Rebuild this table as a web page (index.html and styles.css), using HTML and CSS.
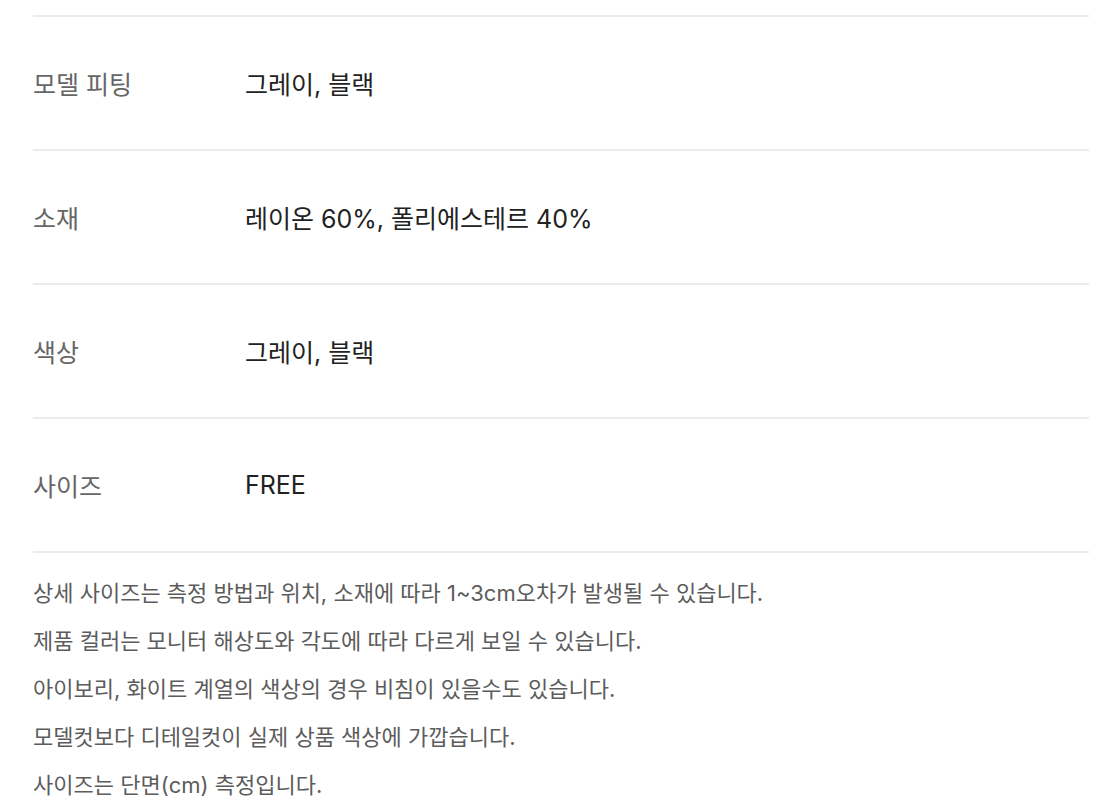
FILE: index.html
```html
<!DOCTYPE html>
<html lang="ko">
<head>
<meta charset="utf-8">
<link rel="stylesheet" href="styles.css">
</head>
<body>
<div class="page">
  <dl class="spec">
    <div class="row"><dt>모델 피팅</dt><dd>그레이, 블랙</dd></div>
    <div class="row"><dt>소재</dt><dd>레이온 60%, 폴리에스테르 40%</dd></div>
    <div class="row"><dt>색상</dt><dd>그레이, 블랙</dd></div>
    <div class="row"><dt>사이즈</dt><dd>FREE</dd></div>
  </dl>
  <ul class="notes">
    <li>상세 사이즈는 측정 방법과 위치, 소재에 따라 1~3cm오차가 발생될 수 있습니다.</li>
    <li>제품 컬러는 모니터 해상도와 각도에 따라 다르게 보일 수 있습니다.</li>
    <li>아이보리, 화이트 계열의 색상의 경우 비침이 있을수도 있습니다.</li>
    <li>모델컷보다 디테일컷이 실제 상품 색상에 가깝습니다.</li>
    <li>사이즈는 단면(cm) 측정입니다.</li>
  </ul>
</div>
</body>
</html>
```
FILE: styles.css
```css
* { box-sizing: border-box; }
html, body { margin: 0; padding: 0; background: #fff; }
body {
  font-family: Inter, "Noto Sans CJK KR", sans-serif;
  color: #222;
}
.page {
  width: 1114px;
  padding: 15px 25px 0 33px;
}
.spec {
  margin: 0;
  border-top: 2px solid #ebebeb;
}
.row {
  display: flex;
  align-items: center;
  height: 134px;
  border-bottom: 2px solid #ebebeb;
}
.row dt {
  width: 212px;
  flex: none;
  font-size: 25px;
  color: #666;
}
.row dd {
  margin: 0;
  font-size: 25px;
  color: #222;
}
.notes {
  list-style: none;
  margin: 0;
  padding: 16px 0 0;
}
.notes li {
  font-size: 22px;
  line-height: 48px;
  color: #5c5c5c;
}
```
